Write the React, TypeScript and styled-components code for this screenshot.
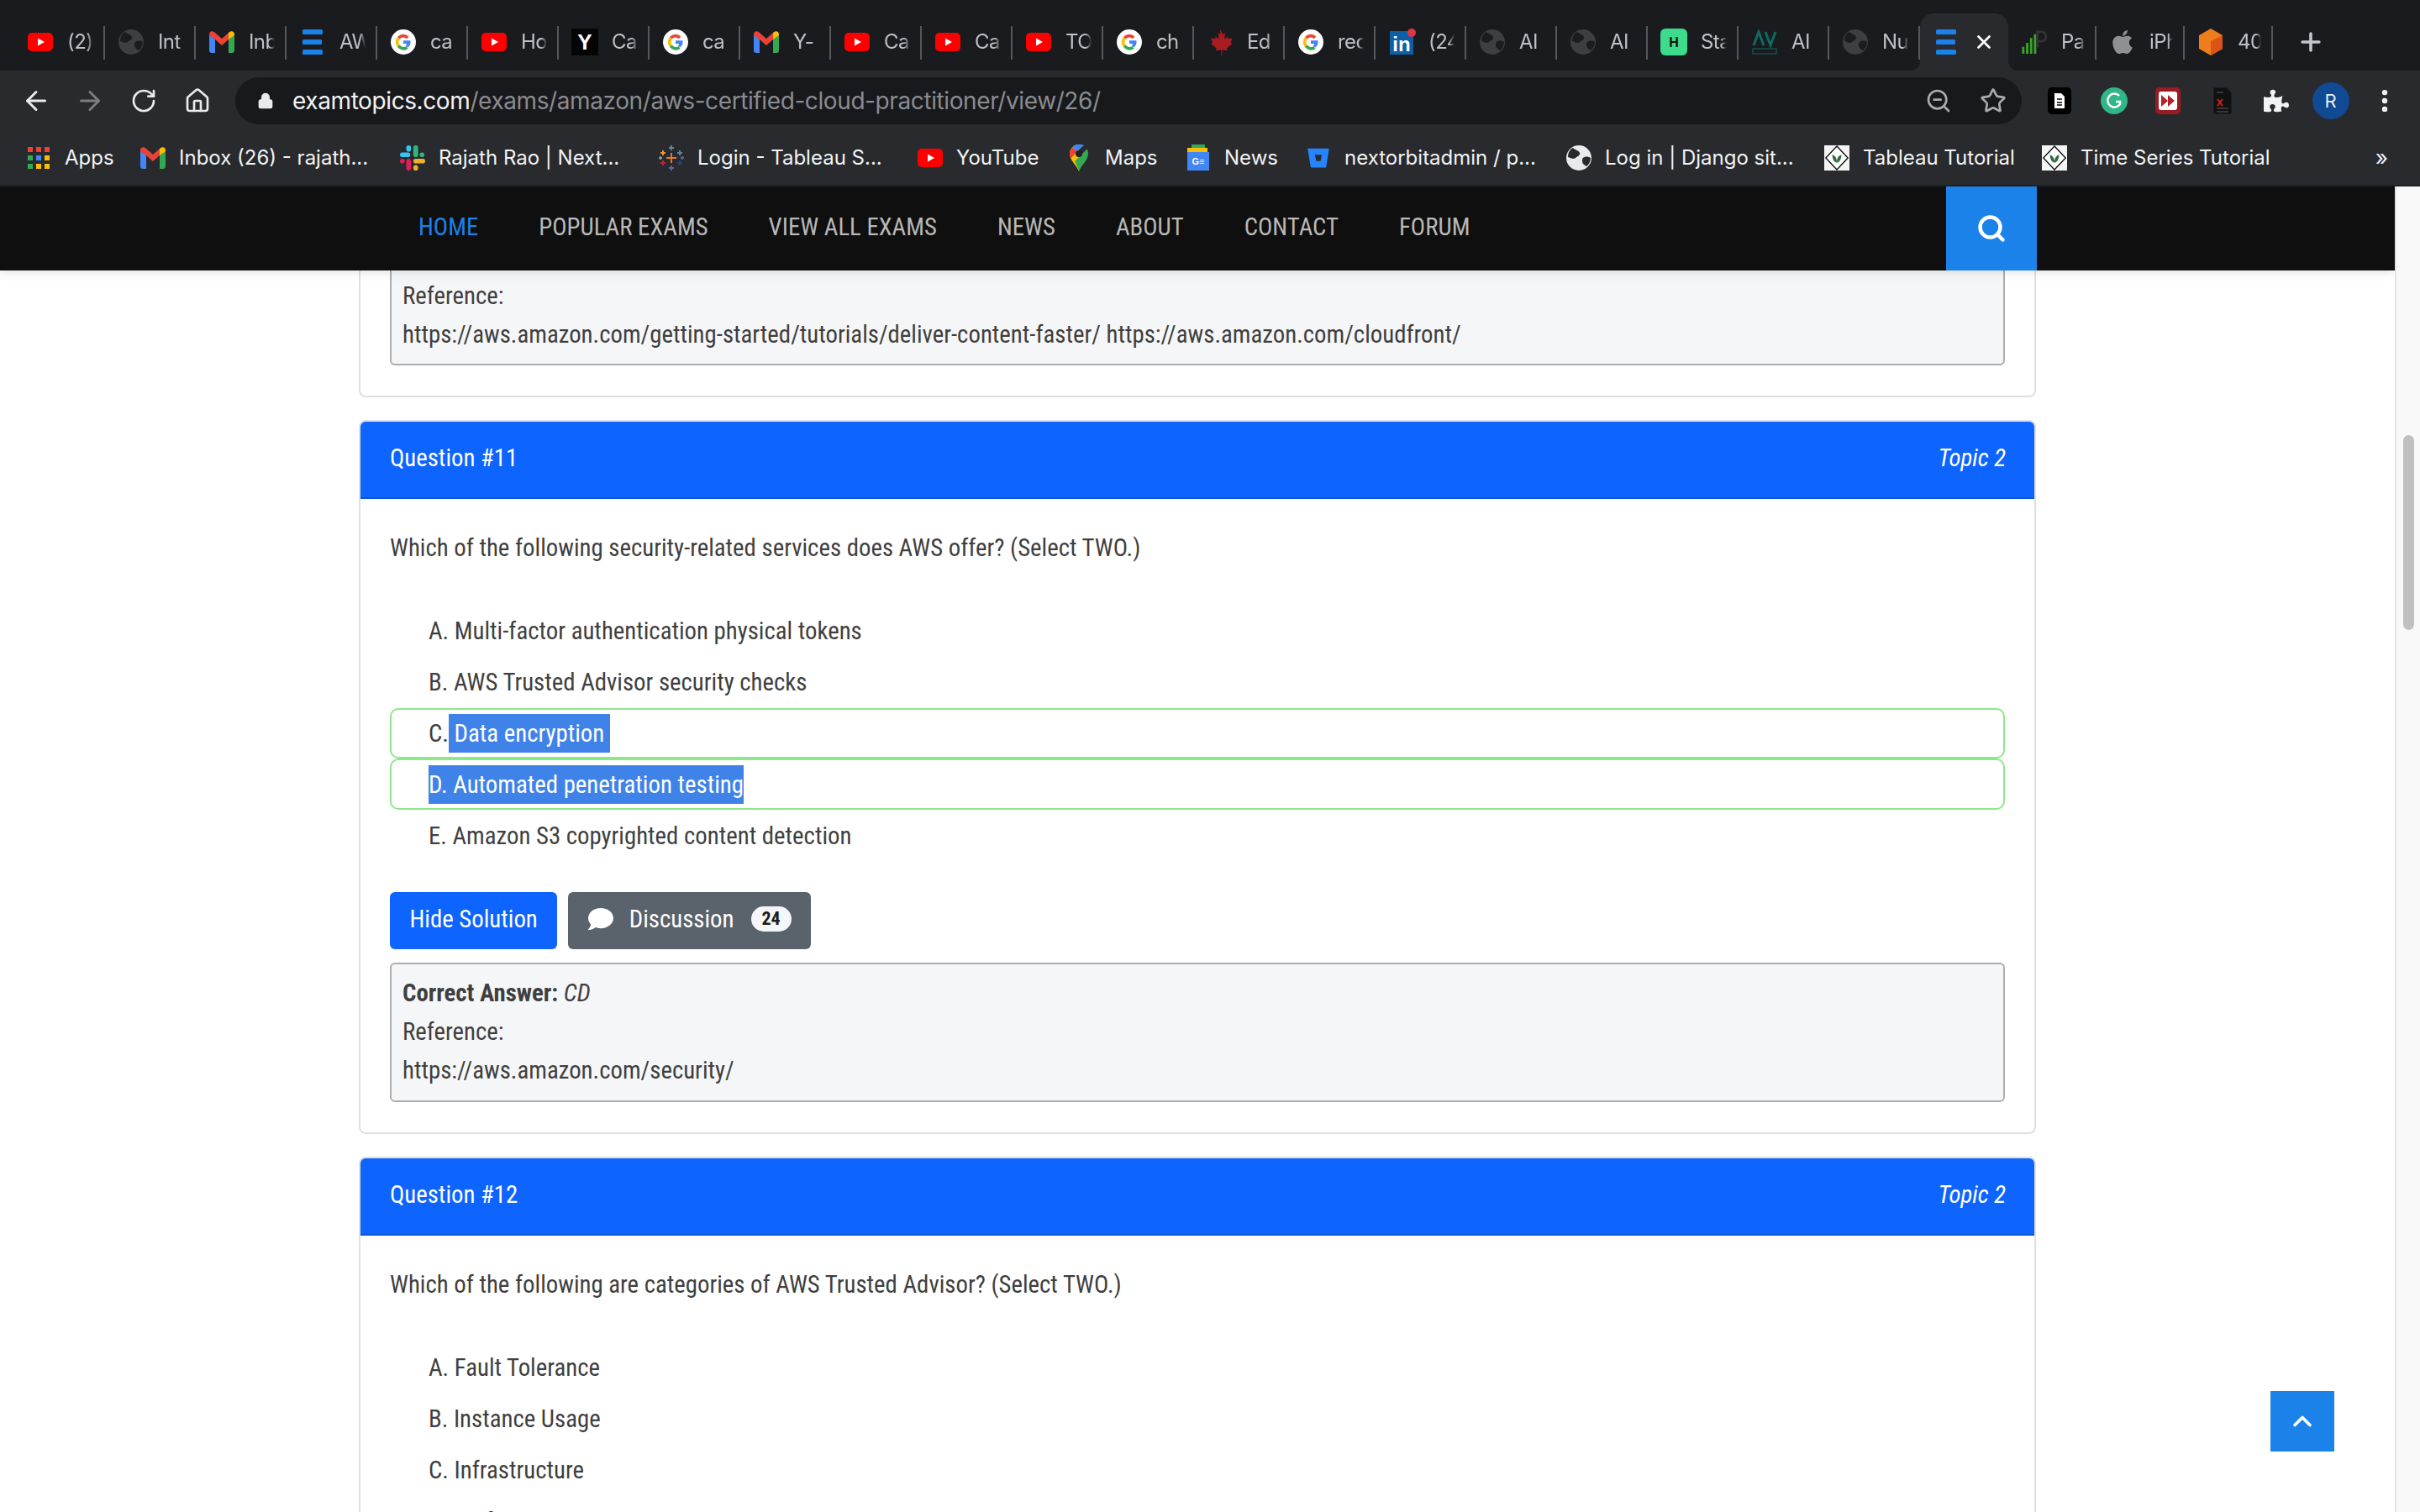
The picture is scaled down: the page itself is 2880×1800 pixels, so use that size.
import React from "react";
import styled, { createGlobalStyle } from "styled-components";
import { FaApple, FaBitbucket, FaComment, FaPuzzlePiece } from "react-icons/fa";
import { ArrowLeft, ArrowRight, ChevronUp, EllipsisVertical, Home, Lock, Plus, RotateCw, Search, Star, X, ZoomOut } from "lucide-react";

const GlobalStyle = createGlobalStyle`
  html, body { margin: 0; padding: 0; background: #fff; }
  * { box-sizing: border-box; }
`;

// favicons
const YouTubeIcon = () => (
  <svg width="30" height="22" viewBox="0 0 30 22">
    <rect width="30" height="22" rx="5" fill="#f00" />
    <path d="M12 6.5l8 4.5-8 4.5z" fill="#fff" />
  </svg>
);
const GlobeIcon = ({ light }: { light?: boolean }) => (
  <svg width="30" height="30" viewBox="0 0 30 30">
    <circle cx="15" cy="15" r="15" fill={light ? "#e8eaed" : "#3c4043"} />
    <path d="M8 3c3 3 7 3 8 6s-3 4-5 6-6 0-9-1c0-5 2-9 6-11zM29 15c-3-2-7-2-9 0s-1 6 1 8l3 2c3-2 5-6 5-10z" fill={light ? "#292a2d" : "#1b1c1f"} />
  </svg>
);
const GmailIcon = () => (
  <svg width="30" height="26" viewBox="0 0 30 26">
    <path d="M0 4v19a3 3 0 0 0 3 3h4V10z" fill="#4285f4" />
    <path d="M30 4v19a3 3 0 0 1-3 3h-4V10z" fill="#34a853" />
    <path d="M0 4c0-4 4-5 7-2l8 7 8-7v8l-8 7-8-7-7-5z" fill="#ea4335" />
    <path d="M23 2c3-3 7-2 7 2v1l-7 5z" fill="#fbbc04" />
  </svg>
);
const BarsIcon = () => (
  <svg width="24" height="30" viewBox="0 0 24 30">
    <rect width="24" height="6" rx="1.5" fill="#1a82e8" />
    <rect y="12" width="23" height="6" rx="1.5" fill="#1a82e8" />
    <rect y="24" width="24" height="6" rx="1.5" fill="#1a82e8" />
  </svg>
);
const GoogleIcon = () => (
  <svg width="32" height="32" viewBox="0 0 32 32">
    <circle cx="16" cy="16" r="16" fill="#fff" />
    <path d="M21.5 10.5a8 8 0 0 0-11.6.5" fill="none" stroke="#ea4335" strokeWidth="4" />
    <path d="M9.9 11a8 8 0 0 0 0 10" fill="none" stroke="#fbbc04" strokeWidth="4" />
    <path d="M9.9 21a8 8 0 0 0 11 2" fill="none" stroke="#34a853" strokeWidth="4" />
    <path d="M16 14.2h9a9 9 0 0 1-3.3 8.6L19 20.5a4 4 0 0 0 1.5-2.5H16z" fill="#4285f4" />
  </svg>
);
const YIcon = styled.span`
  width: 32px;
  height: 32px;
  background: #050505;
  color: #fff;
  font: 700 26px/32px "Liberation Sans", sans-serif;
  text-align: center;
  flex: none;
`;
const MapleIcon = () => (
  <svg width="32" height="32" viewBox="0 0 32 32">
    <path d="M16 0l3.5 6 3-1.500-1 8 4-3.500 1 3 5-1-2 6 2 1-7 6 1 3-7-1v7h-1v-7l-7 1 1-3-7-6 2-1-2-6 5 1 1-3 4 3.500-1-8 3 1.500z" fill="#a81c22" />
  </svg>
);
const LinkedInIcon = styled.span`
  position: relative;
  width: 28px;
  height: 28px;
  margin-top: 2px;
  background: #0f5fa6;
  color: #fff;
  font: 700 24px/31px "Liberation Sans", sans-serif;
  text-align: center;
  flex: none;
  &::after {
    content: "";
    position: absolute;
    right: -3px;
    top: -3px;
    width: 10px;
    height: 10px;
    border-radius: 50%;
    background: #e0383e;
  }
`;
const HIcon = styled.span`
  width: 32px;
  height: 32px;
  border-radius: 6px;
  background: #3ddc8c;
  color: #111;
  font: 700 16px/34px "Liberation Sans", sans-serif;
  text-align: center;
  flex: none;
`;
const AvIcon = () => (
  <svg width="30" height="30" viewBox="0 0 30 30">
    <path d="M2 19L8 3l6 16M16 3l6 16 6-16" fill="none" stroke="#0f6b5f" strokeWidth="3" />
    <rect x="1" y="23" width="28" height="6" fill="none" stroke="#0f6b5f" />
  </svg>
);
const SignalIcon = () => (
  <svg width="32" height="30" viewBox="0 0 32 30">
    <path d="M2 30V21M7 30V16M12 30V10M17 30V5" stroke="#3aa52a" strokeWidth="3" />
    <path d="M20 22V2h5a6 6 0 0 1 0 12h-5" fill="none" stroke="#333" strokeWidth="3" />
  </svg>
);
const CubeIcon = () => (
  <svg width="30" height="32" viewBox="0 0 30 32">
    <path d="M15 0l14 8v16l-14 8L1 24V8z" fill="#ee7d1c" />
    <path d="M15 15l14-7v16l-14 8z" fill="#dc5318" />
  </svg>
);
const AppsIcon = () => (
  <svg width="26" height="26" viewBox="0 0 26 26">
    {["#ea4335", "#ea4335", "#ea4335", "#34a853", "#4285f4", "#fbbc04", "#34a853", "#fbbc04", "#fbbc04"].map((c, i) => (
      <rect key={i} x={(i % 3) * 10} y={Math.floor(i / 3) * 10} width="6" height="6" fill={c} />
    ))}
  </svg>
);
const SlackIcon = () => (
  <svg width="32" height="32" viewBox="0 0 32 32">
    <rect x="0" y="9" width="13" height="6" rx="3" fill="#36c5f0" />
    <rect x="8" y="0" width="6" height="8" rx="3" fill="#36c5f0" />
    <rect x="17" y="0" width="6" height="15" rx="3" fill="#2eb67d" />
    <rect x="25" y="9" width="6" height="6" rx="3" fill="#2eb67d" />
    <rect x="17" y="17" width="15" height="6" rx="3" fill="#ecb22e" />
    <rect x="17" y="25" width="6" height="7" rx="3" fill="#ecb22e" />
    <rect x="8" y="17" width="6" height="15" rx="3" fill="#e01e5a" />
    <rect x="0" y="17" width="6" height="6" rx="3" fill="#e01e5a" />
  </svg>
);
const TableauIcon = () => (
  <svg width="30" height="32" viewBox="0 0 30 32">
    {[
      [15, 16, "#e8762c", 6],
      [15, 4, "#5b879b", 3],
      [15, 28, "#5b6591", 3],
      [5, 10, "#eb912b", 3],
      [25, 10, "#59879b", 3],
      [5, 22, "#c72035", 3],
      [25, 22, "#1f447e", 3],
      [2, 16, "#7099a6", 2],
      [28, 16, "#5b6591", 2],
    ].map(([x, y, c, r], i) => (
      <path key={i} d={`M${+x - +r} ${y}h${+r * 2}M${x} ${+y - +r}v${+r * 2}`} stroke={c as string} strokeWidth="2" />
    ))}
  </svg>
);
const MapsIcon = () => (
  <svg width="22" height="32" viewBox="0 0 22 32">
    <path d="M11 32C8 24 0 19 0 11a11 11 0 0 1 11-11z" fill="#fbbc04" />
    <path d="M11 32c3-8 11-13 11-21 0-2-.5-4-1.500-5.500L6 20c2 4 4 8 5 12z" fill="#34a853" />
    <path d="M3 3.500A11 11 0 0 0 0 11c0 2 .6 3.700 1.500 5.500L9 8z" fill="#ea4335" />
    <path d="M3 3.500A11 11 0 0 1 17 1L9 8z" fill="#4285f4" />
    <circle cx="11" cy="11" r="4" fill="#222" />
  </svg>
);
const NewsIcon = styled.span`
  position: relative;
  width: 26px;
  height: 22px;
  margin-top: 8px;
  background: #4285f4;
  color: #fff;
  font: 700 11px/22px "Liberation Sans", sans-serif;
  text-align: center;
  flex: none;
  &::before {
    content: "";
    position: absolute;
    left: 0;
    top: -5px;
    width: 24px;
    height: 5px;
    background: #fbbc04;
  }
  &::after {
    content: "";
    position: absolute;
    left: 5px;
    top: -9px;
    width: 16px;
    height: 4px;
    background: #34a853;
  }
`;
const TutorialIcon = () => (
  <svg width="32" height="32" viewBox="0 0 32 32">
    <rect width="32" height="32" fill="#f4f4f4" />
    <path d="M16 1l14 15-14 15L2 16z" fill="#fff" stroke="#111" strokeWidth="1.500" />
    <path d="M10 12c4 1 6 4 6 10 0-6 2-9 6-10-1 6-2 9-6 10-4-1-5-4-6-10z" fill="#2f6a3c" />
  </svg>
);
const DocIcon = () => (
  <svg width="28" height="32" viewBox="0 0 28 32">
    <rect width="28" height="32" rx="5" fill="#000" />
    <path d="M8 7h8l4 4v14H8z" fill="#fff" />
    <path d="M11 14h6M11 18h6M11 21h6" stroke="#000" strokeWidth="1.500" />
  </svg>
);
const GrammarlyIcon = () => (
  <svg width="32" height="32" viewBox="0 0 32 32">
    <circle cx="16" cy="16" r="16" fill="#2fb787" />
    <path d="M22 10a8 8 0 1 0 1 10v-3h-5" fill="none" stroke="#fff" strokeWidth="2.500" />
  </svg>
);
const ForwardIcon = () => (
  <svg width="30" height="32" viewBox="0 0 30 32">
    <rect width="30" height="32" rx="5" fill="#9c1a22" />
    <rect x="4" y="5" width="22" height="22" rx="3" fill="#fff" />
    <path d="M7 9l8 7-8 7zM15 9l8 7-8 7z" fill="#b5202a" />
  </svg>
);
const XpIcon = () => (
  <svg width="24" height="34" viewBox="0 0 24 34">
    <path d="M1 1h16l6 7v25H1z" fill="#111" stroke="#2a2a2a" />
    <path d="M5 7h8M5 26h14M5 30h14" stroke="#444" strokeWidth="1.500" />
    <path d="M6 15l6 8M12 15l-6 8" stroke="#d62020" strokeWidth="2" />
  </svg>
);
const BitbucketIcon = styled(FaBitbucket)`
  color: #2684ff;
  flex: none;
`;
const AppleIcon = styled(FaApple)`
  color: #8e9094;
  flex: none;
`;

const TabStrip = styled.div`
  display: flex;
  align-items: flex-end;
  height: 84px;
  padding-left: 17px;
  background: #1a1b1e;
`;
const Tab = styled.div<{ $width?: number; $active?: boolean }>`
  display: flex;
  align-items: center;
  gap: 17px;
  width: ${(p) => p.$width ?? 108}px;
  flex: none;
  height: 68px;
  padding: 0 14px 0 16px;
  position: relative;
  color: #bdc1c6;
  background: ${(p) => (p.$active ? "#292a2e" : "transparent")};
  border-radius: ${(p) => (p.$active ? "16px 16px 0 0" : "0")};
  &::after {
    content: "";
    display: ${(p) => (p.$active ? "none" : "block")};
    position: absolute;
    right: 0;
    top: 15px;
    width: 2px;
    height: 40px;
    background: #55575b;
  }
`;
const TabCorner = styled.span<{ $side: "left" | "right" }>`
  position: absolute;
  bottom: 0;
  ${(p) => p.$side}: -12px;
  width: 12px;
  height: 12px;
  background: radial-gradient(circle at ${(p) => (p.$side === "left" ? "0 0" : "100% 0")}, transparent 12px, #292a2e 12.500px);
`;
const TabIconBox = styled.span`
  display: flex;
  align-items: center;
  justify-content: center;
  width: 30px;
  flex: none;
`;
const TabTitle = styled.span`
  flex: 1;
  min-width: 0;
  overflow: hidden;
  white-space: nowrap;
  font: 400 24px/32px Inter, sans-serif;
  letter-spacing: -0.6px;
  -webkit-mask-image: linear-gradient(to right, #000 78%, transparent);
  mask-image: linear-gradient(to right, #000 78%, transparent);
`;
const NewTab = styled.div`
  display: flex;
  align-items: center;
  height: 68px;
  margin-left: 28px;
  color: #c4c7cb;
`;

const Toolbar = styled.div`
  display: flex;
  align-items: center;
  height: 72px;
  padding: 0 0 0 24px;
  background: #292a2e;
`;
const NavIcon = styled.span<{ $dim?: boolean }>`
  display: flex;
  justify-content: center;
  flex: none;
  width: 38px;
  margin-right: 26px;
  color: ${(p) => (p.$dim ? "#7b7d81" : "#e8eaed")};
`;
const AddressBar = styled.div`
  display: flex;
  align-items: center;
  flex: none;
  width: 2126px;
  height: 56px;
  padding: 0 18px 0 26px;
  border-radius: 28px;
  background: #18191c;
`;
const Url = styled.span`
  flex: 1;
  margin-left: 22px;
  font: 400 28px/56px Inter, sans-serif;
  letter-spacing: -0.4px;
  color: #8a8c90;
  white-space: nowrap;
  b {
    font-weight: 400;
    color: #f1f3f4;
  }
`;
const BarAction = styled.span<{ $margin?: number }>`
  display: flex;
  color: #a9abae;
  margin-left: ${(p) => p.$margin ?? 0}px;
`;
const Extensions = styled.div`
  display: flex;
  align-items: center;
  flex: none;
  margin-left: 13px;
`;
const Extension = styled.span`
  display: flex;
  justify-content: center;
  width: 64.500px;
  color: #f1f3f4;
`;
const Avatar = styled.span`
  width: 44px;
  height: 44px;
  margin: 0 10px;
  border-radius: 50%;
  background: #0f4a93;
  color: #e8eaed;
  font: 400 22px/44px Inter, sans-serif;
  text-align: center;
`;

const BookmarkBar = styled.div`
  display: flex;
  align-items: center;
  height: 66px;
  padding: 0 0 0 31px;
  background: #292a2e;
  border-bottom: 2px solid #1f2023;
  color: #f1f3f4;
  font: 400 24px/32px Inter, sans-serif;
`;
const Bookmark = styled.span<{ $width: number }>`
  display: flex;
  align-items: center;
  gap: 16px;
  flex: none;
  width: ${(p) => p.$width}px;
  white-space: nowrap;
`;
const BookmarkIconBox = styled.span`
  display: flex;
  align-items: center;
  justify-content: center;
  flex: none;
  width: 30px;
`;
const MoreBookmarks = styled.span`
  margin-left: auto;
  font-size: 26px;
  padding-right: 38px;
`;

const Viewport = styled.div`
  display: flex;
  flex: 1;
  min-height: 0;
`;
const PageArea = styled.div`
  position: relative;
  display: flex;
  flex-direction: column;
  flex: 1;
  min-width: 0;
  overflow: hidden;
  background: #fff;
`;
const SiteNav = styled.nav`
  position: relative;
  z-index: 2;
  display: flex;
  flex: none;
  height: 100px;
  padding-left: 498px;
  background: #0f0f0f;
  box-shadow: 0 2px 12px rgba(0, 0, 0, 0.12);
`;
const NavLink = styled.a<{ $active?: boolean }>`
  margin-right: 72px;
  font: 400 28.800px/96px Roboto, sans-serif;
  font-stretch: 75%;
  color: ${(p) => (p.$active ? "#1a82e8" : "#b8b8b8")};
  white-space: nowrap;
`;
const SearchButton = styled.span`
  display: flex;
  align-items: center;
  justify-content: center;
  width: 108px;
  margin-left: auto;
  margin-right: 426px;
  background: #1a82e8;
  color: #fff;
`;
const Content = styled.main`
  display: flex;
  flex-direction: column;
  gap: 27px;
  width: 1996px;
  margin: 0 auto;
  font: 400 28.800px/46px Roboto, sans-serif;
  font-stretch: 75%;
  color: #3f3f3f;
`;
const Card = styled.section<{ $clipped?: boolean }>`
  flex: none;
  border: 2px solid #e0e0e0;
  border-top-width: ${(p) => (p.$clipped ? 0 : 2)}px;
  border-radius: ${(p) => (p.$clipped ? "0 0 8px 8px" : "8px")};
  background: #fff;
`;
const CardHeader = styled.header`
  display: flex;
  align-items: center;
  justify-content: space-between;
  height: 92px;
  padding: 0 34px 4px 35px;
  background: #0d64ff;
  border-bottom: 2px solid #0b55d8;
  border-radius: 6px 6px 0 0;
  color: #fff;
`;
const Topic = styled.em`
  font-style: italic;
`;
const CardBody = styled.div<{ $clipped?: boolean }>`
  padding: ${(p) => (p.$clipped ? "0 35px 36px" : "35px 35px 36px")};
`;
const QuestionText = styled.p`
  margin: 0 0 46px;
`;
const Choices = styled.ul`
  list-style: none;
  margin: 0;
  padding: 0;
`;
const Choice = styled.li<{ $correct?: boolean }>`
  display: flex;
  align-items: center;
  height: 60.800px;
  padding-left: 44px;
  border: 2px solid ${(p) => (p.$correct ? "#8de88a" : "transparent")};
  border-radius: 10px;
  white-space: pre;
`;
const Selected = styled.span`
  background: #3f83e8;
  color: #fff;
`;
const Actions = styled.div`
  display: flex;
  gap: 13px;
  margin-top: 37px;
`;
const ActionButton = styled.span<{ $secondary?: boolean }>`
  display: flex;
  align-items: center;
  height: 68px;
  padding: 0 23.500px 3px;
  border-radius: 6px;
  background: ${(p) => (p.$secondary ? "#5a626c" : "#0d64ff")};
  color: #fff;
  white-space: nowrap;
`;
const CommentIcon = styled(FaComment)`
  margin-right: 19px;
`;
const Badge = styled.span`
  margin-left: 20px;
  width: 48px;
  height: 30px;
  border-radius: 15px;
  background: #f5f6f8;
  color: #1c1c1c;
  font: 700 22px/30px Roboto, sans-serif;
  font-stretch: 75%;
  text-align: center;
`;
const AnswerBox = styled.div<{ $clipped?: boolean }>`
  margin-top: ${(p) => (p.$clipped ? 0 : 16)}px;
  padding: ${(p) => (p.$clipped ? "7px 13px 12px" : "11px 13px 13px")};
  border: 2px solid #adadad;
  border-top-width: ${(p) => (p.$clipped ? 0 : 2)}px;
  border-radius: ${(p) => (p.$clipped ? "0 0 6px 6px" : "6px")};
  background: #f5f6f8;
`;
const Line = styled.div`
  white-space: nowrap;
`;
const ScrollRail = styled.div`
  flex: none;
  width: 30px;
  padding: 296px 7px 0 8px;
  background: #f9f9f9;
  border-left: 2px solid #e3e3e3;
`;
const ScrollThumb = styled.div`
  height: 232px;
  border-radius: 8px;
  background: #c0c0c0;
`;
const BackToTop = styled.span`
  position: absolute;
  right: 72px;
  bottom: 72px;
  z-index: 3;
  display: flex;
  align-items: center;
  justify-content: center;
  width: 76px;
  height: 72px;
  background: #1a82e8;
  color: #fff;
`;
const Root = styled.div`
  display: flex;
  flex-direction: column;
  width: 2880px;
  height: 1800px;
  overflow: hidden;
`;

const G = <GoogleIcon />;
const YT = <YouTubeIcon />;
const tabs: [React.ReactNode, string][] = [
  [YT, "(2)"],
  [<GlobeIcon />, "Int"],
  [<GmailIcon />, "Inb"],
  [<BarsIcon />, "AW"],
  [G, "ca"],
  [YT, "Ho"],
  [<YIcon>Y</YIcon>, "Ca"],
  [G, "ca"],
  [<GmailIcon />, "Y-"],
  [YT, "Ca"],
  [YT, "Ca"],
  [YT, "TO"],
  [G, "ch"],
  [<MapleIcon />, "Ed"],
  [G, "rec"],
  [<LinkedInIcon>in</LinkedInIcon>, "(24"],
  [<GlobeIcon />, "AI"],
  [<GlobeIcon />, "AI"],
  [<HIcon>H</HIcon>, "Sta"],
  [<AvIcon />, "AI"],
  [<GlobeIcon />, "Nu"],
];
const laterTabs: [React.ReactNode, string][] = [
  [<SignalIcon />, "Pa"],
  [<AppleIcon size={32} />, "iPh"],
  [<CubeIcon />, "40"],
];
const bookmarks: [React.ReactNode, string, number][] = [
  [<AppsIcon />, "Apps", 136],
  [<GmailIcon />, "Inbox (26) - rajath...", 309],
  [<SlackIcon />, "Rajath Rao | Next...", 308],
  [<TableauIcon />, "Login - Tableau S...", 308],
  [YT, "YouTube", 177],
  [<MapsIcon />, "Maps", 142],
  [<NewsIcon>G≡</NewsIcon>, "News", 143],
  [<BitbucketIcon size={26} />, "nextorbitadmin / p...", 310],
  [<GlobeIcon light />, "Log in | Django sit...", 307],
  [<TutorialIcon />, "Tableau Tutorial", 259],
  [<TutorialIcon />, "Time Series Tutorial", 280],
];
const navLinks = ["POPULAR EXAMS", "VIEW ALL EXAMS", "NEWS", "ABOUT", "CONTACT", "FORUM"];

const App = () => {
  return (
    <Root>
      <GlobalStyle />
      <TabStrip>
        {tabs.map(([icon, title], i) => (
          <Tab key={i}>
            <TabIconBox>{icon}</TabIconBox>
            <TabTitle>{title}</TabTitle>
          </Tab>
        ))}
        <Tab $active $width={105}>
          <TabCorner $side="left" />
          <TabIconBox>
            <BarsIcon />
          </TabIconBox>
          <X size={26} color="#fff" strokeWidth={2.5} />
          <TabCorner $side="right" />
        </Tab>
        {laterTabs.map(([icon, title], i) => (
          <Tab key={i} $width={105}>
            <TabIconBox>{icon}</TabIconBox>
            <TabTitle>{title}</TabTitle>
          </Tab>
        ))}
        <NewTab>
          <Plus size={34} strokeWidth={2.5} />
        </NewTab>
      </TabStrip>
      <Toolbar>
        <NavIcon>
          <ArrowLeft size={36} />
        </NavIcon>
        <NavIcon $dim>
          <ArrowRight size={36} />
        </NavIcon>
        <NavIcon>
          <RotateCw size={32} />
        </NavIcon>
        <NavIcon>
          <Home size={32} />
        </NavIcon>
        <AddressBar>
          <Lock size={20} color="#e8eaed" fill="#e8eaed" />
          <Url>
            <b>examtopics.com</b>/exams/amazon/aws-certified-cloud-practitioner/view/26/
          </Url>
          <BarAction>
            <ZoomOut size={32} />
          </BarAction>
          <BarAction $margin={33}>
            <Star size={32} />
          </BarAction>
        </AddressBar>
        <Extensions>
          <Extension>
            <DocIcon />
          </Extension>
          <Extension>
            <GrammarlyIcon />
          </Extension>
          <Extension>
            <ForwardIcon />
          </Extension>
          <Extension>
            <XpIcon />
          </Extension>
          <Extension>
            <FaPuzzlePiece size={30} />
          </Extension>
          <Avatar>R</Avatar>
          <Extension>
            <EllipsisVertical size={34} strokeWidth={2.5} />
          </Extension>
        </Extensions>
      </Toolbar>
      <BookmarkBar>
        {bookmarks.map(([icon, title, width], i) => (
          <Bookmark key={i} $width={width}>
            <BookmarkIconBox>{icon}</BookmarkIconBox>
            {title}
          </Bookmark>
        ))}
        <MoreBookmarks>»</MoreBookmarks>
      </BookmarkBar>
      <Viewport>
        <PageArea>
          <SiteNav>
            <NavLink $active>HOME</NavLink>
            {navLinks.map((link) => (
              <NavLink key={link}>{link}</NavLink>
            ))}
            <SearchButton>
              <Search size={36} strokeWidth={3} />
            </SearchButton>
          </SiteNav>
          <Content>
            <Card $clipped>
              <CardBody $clipped>
                <AnswerBox $clipped>
                  <Line>Reference:</Line>
                  <Line>https://aws.amazon.com/getting-started/tutorials/deliver-content-faster/ https://aws.amazon.com/cloudfront/</Line>
                </AnswerBox>
              </CardBody>
            </Card>
            <Card>
              <CardHeader>
                <span>Question #11</span>
                <Topic>Topic 2</Topic>
              </CardHeader>
              <CardBody>
                <QuestionText>Which of the following security-related services does AWS offer? (Select TWO.)</QuestionText>
                <Choices>
                  <Choice>A. Multi-factor authentication physical tokens</Choice>
                  <Choice>B. AWS Trusted Advisor security checks</Choice>
                  <Choice $correct>
                    C.<Selected> Data encryption </Selected>
                  </Choice>
                  <Choice $correct>
                    <Selected>D. Automated penetration testing</Selected>
                  </Choice>
                  <Choice>E. Amazon S3 copyrighted content detection</Choice>
                </Choices>
                <Actions>
                  <ActionButton>Hide Solution</ActionButton>
                  <ActionButton $secondary>
                    <CommentIcon size={30} />
                    Discussion
                    <Badge>24</Badge>
                  </ActionButton>
                </Actions>
                <AnswerBox>
                  <Line>
                    <b>Correct Answer:</b> <i>CD</i>
                  </Line>
                  <Line>Reference:</Line>
                  <Line>https://aws.amazon.com/security/</Line>
                </AnswerBox>
              </CardBody>
            </Card>
            <Card>
              <CardHeader>
                <span>Question #12</span>
                <Topic>Topic 2</Topic>
              </CardHeader>
              <CardBody>
                <QuestionText>Which of the following are categories of AWS Trusted Advisor? (Select TWO.)</QuestionText>
                <Choices>
                  <Choice>A. Fault Tolerance</Choice>
                  <Choice>B. Instance Usage</Choice>
                  <Choice>C. Infrastructure</Choice>
                  <Choice>D. Performance</Choice>
                </Choices>
              </CardBody>
            </Card>
          </Content>
          <BackToTop>
            <ChevronUp size={36} strokeWidth={2.5} />
          </BackToTop>
        </PageArea>
        <ScrollRail>
          <ScrollThumb />
        </ScrollRail>
      </Viewport>
    </Root>
  );
};

export default App;
